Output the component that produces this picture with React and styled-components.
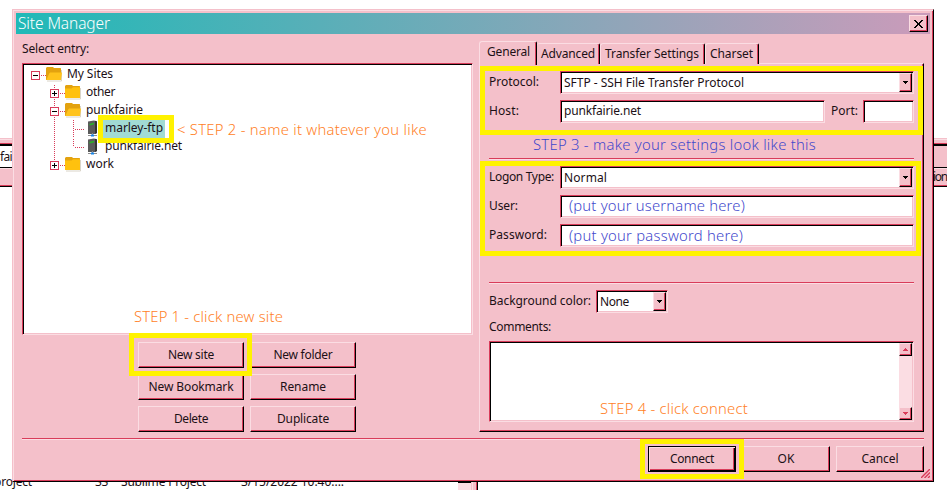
import React, { useLayoutEffect, useRef } from "react";
import styled, { createGlobalStyle, css } from "styled-components";

const C = { pink: "#f4c0ca", light: "#fbdde3", red: "#d93c5a", black: "#000", yellow: "#fff200", orange: "#ff7f27", blue: "#3f48cc" };

const Global = createGlobalStyle`
  html, body { margin: 0; background: #fff; overflow: hidden; }
  * { box-sizing: border-box; }
`;
const raised = css`
  border: 1px solid; border-color: ${C.light} ${C.black} ${C.black} ${C.light};
  box-shadow: inset -1px -1px ${C.red};
  background: ${C.pink};
`;
const sunken = css`
  border: 1px solid; border-color: ${C.red} ${C.light} ${C.light} ${C.red};
  box-shadow: inset 1px 1px ${C.black}, inset -1px -1px ${C.pink};
  background: #fff;
`;

const Label = styled.span`
  display: inline-block; white-space: pre; flex: none; align-self: flex-start;
  font-family: "Noto Sans", "Open Sans", sans-serif;
  font-size: ${p => p.$size || 12}px; line-height: 18px;
  font-weight: ${p => (p.$thin ? 350 : 400)};
  color: ${p => p.$color || "#1c1016"};
`;

/* Text tracked so that it fills exactly the given width. */
function Text({ w, children, ...rest }) {
  const ref = useRef(null);
  useLayoutEffect(() => {
    const el = ref.current;
    el.style.letterSpacing = "0px";
    el.style.width = "auto";
    const natural = el.getBoundingClientRect().width;
    el.style.letterSpacing = `${(w - natural) / children.length}px`;
    el.style.width = `${w}px`;
  }, [w, children]);
  return <Label ref={ref} {...rest}>{children}</Label>;
}

const Screen = styled.div`position: relative; width: 947px; height: 490px; overflow: hidden; background: #fff;`;
const Backdrop = styled.div`display: flex; flex-direction: column; height: 490px; padding-top: 138px;`;
const BarTop = styled.div`
  height: 6px; background: ${C.pink}; border-top: 1px solid ${C.pink};
  box-shadow: inset 0 1px ${C.light}, inset 0 -1px ${C.red};
`;
const AddressBar = styled.div`
  display: flex; height: 24px; padding-top: 2px;
  border-top: 2px solid #000; border-bottom: 1px solid #000;
  background: linear-gradient(90deg, #fff 0 500px, ${C.pink} 500px);
`;
const HeaderBar = styled.div`
  display: flex; justify-content: flex-end; height: 19px; background: ${C.pink};
  border-bottom: 1px solid #000; box-shadow: inset 0 -1px ${C.red}, inset 0 1px ${C.light};
`;
const FileList = styled.div`display: flex; flex: 1; align-items: flex-end;`;
const FileRow = styled.div`display: flex; width: 458px; height: 17px;`;
const Cell = styled.div`display: flex; width: ${p => p.$w}px; flex: none; justify-content: ${p => (p.$clip ? "flex-end" : "flex-start")}; padding-right: ${p => p.$clip || 0}px;`;
const ListEdge = styled.div`
  width: 20px; height: 9px; border-right: 1px solid #000; box-shadow: inset -1px 0 ${C.red};
  background: linear-gradient(90deg, ${C.light} 0 13px, ${C.pink} 13px 14px, ${C.light} 14px 15px, ${C.pink} 15px);
`;
const ListEdgeTop = styled.div`width: 13px; height: 2px; background: #000;`;

const Dialog = styled.div`
  position: absolute; left: 12px; top: 9px; width: 922px; height: 473px; padding: 3px;
  background: ${C.pink}; border: 1px solid; border-color: ${C.pink} #000 #000 ${C.pink};
  box-shadow: inset 1px 1px ${C.light}, inset -1px -1px ${C.red};
`;
const TitleBar = styled.div`
  display: flex; justify-content: space-between; align-items: flex-start; height: 21px; padding: 2px 2px 0 2px;
  background: linear-gradient(90deg, #20b9b7, #cb9bba);
`;
const TitleText = styled.div`display: flex; margin-top: -1px;`;
const CloseButton = styled.div`${raised} width: 19px; height: 17px; display: flex; align-items: center; justify-content: center;`;
const Columns = styled.div`display: flex; height: 404px; padding: 0 6px;`;
const Left = styled.div`width: 451px; padding-top: 6px; display: flex; flex-direction: column;`;
const Tree = styled.div`${sunken} height: 272px; margin-top: 5px; padding: 2px 0 0 8px;`;
const Node = styled.div`display: flex; align-items: center; height: 18px; padding-left: ${p => p.$indent}px;`;
const Icon = styled.svg`display: block; flex: none;`;
const Name = styled.div`
  display: flex; height: 18px; padding: 0 2px; margin-left: ${p => p.$gap || 0}px;
  background: ${p => (p.$on ? "#a1dbd4" : "transparent")};
  & > span { margin-top: -1px; }
`;
const ButtonGrid = styled.div`
  display: grid; grid-template-columns: 106px 106px; grid-auto-rows: 26px; gap: 6px; margin: 7px 0 0 116px;
`;
const Button = styled.div`
  ${raised} display: flex; justify-content: center; padding-top: 3px; height: 26px; width: ${p => p.$w || 106}px;
  ${p => p.$default && css`border-color: #000; box-shadow: inset 1px 1px ${C.light}, inset -1px -1px #000, inset -2px -2px ${C.red};`}
`;
const Right = styled.div`width: 445px; margin-left: 6px; padding-top: 7px;`;
const Tabs = styled.div`display: flex; align-items: flex-end; height: 23px; margin-bottom: -1px;`;
const Tab = styled.div`
  position: relative; z-index: ${p => (p.$active ? 1 : 0)};
  width: ${p => p.$w}px; height: 21px; padding-left: ${p => (p.$active ? 7 : 4)}px;
  background: ${C.pink}; border: solid; border-width: 1px 1px 0 ${p => (p.$divided || p.$active ? 1 : 0)}px;
  border-color: ${C.light} #000 ${C.light} ${C.light}; border-radius: 3px 2px 0 0;
  box-shadow: inset -1px 0 ${C.red};
  ${p => p.$active && css`margin-bottom: -1px; height: 24px;`}
`;
const Panel = styled.div`${raised} height: 369px; padding: 7px 9px 0 9px; display: flex; flex-direction: column;`;
const Row = styled.div`display: flex; height: 23px; align-items: flex-start; margin-bottom: ${p => p.$mb || 0}px;`;
const FieldLabel = styled.div`
  display: flex; width: ${p => p.$w || 71}px; height: 23px; flex: none;
  padding: ${p => p.$pt ?? 2}px 0 0 ${p => p.$pl || 0}px;
`;
const Field = styled.div`
  ${sunken} display: flex; justify-content: space-between; width: ${p => p.$w}px; height: 23px; padding: 1px 1px 1px 3px; flex: none;
  & > span { margin-top: ${p => (p.$combo ? 1 : 0)}px; }
`;
const DropButton = styled.div`${raised} width: 13px; height: 19px; display: flex; align-items: center; justify-content: center;`;
const Rule = styled.div`height: 2px; background: ${C.light}; border-top: 1px solid ${C.red}; margin: ${p => p.$m || 0};`;
const Comments = styled.div`${sunken} height: 81px; padding: 1px; display: flex; justify-content: flex-end;`;
const Scrollbar = styled.div`width: 13px; height: 77px; background: ${C.light}; display: flex; flex-direction: column; justify-content: space-between;`;
const ScrollButton = styled.div`${raised} width: 13px; height: 13px; display: flex; align-items: center; justify-content: center;`;
const Footer = styled.div`display: flex; justify-content: flex-end; gap: 6px; padding: 6px 6px 0 0;`;
const Grip = styled.svg`position: absolute; right: 3px; bottom: 3px;`;
const Mark = styled.div`
  position: absolute; left: ${p => p.$x}px; top: ${p => p.$y}px; width: ${p => p.$w}px; height: ${p => p.$h}px;
  border: 5px solid ${C.yellow};
`;
const NotePlace = styled.div`display: flex; position: absolute; left: ${p => p.$x}px; top: ${p => p.$y}px;`;

const Note = ({ x, y, w, color, children }) => (
  <NotePlace $x={x} $y={y}><Text w={w} $size={14.800} $thin $color={color}>{children}</Text></NotePlace>
);
const Arrow = ({ up, color = "#000" }) => (
  <Icon width="5" height="3" viewBox="0 0 5 3" shapeRendering="crispEdges">
    <path fill={color} d={up ? "M2 0h1v1h1v1h1v1H0V2h1V1h1z" : "M0 0h5v1H4v1H3v1H2V2H1V1H0z"} />
  </Icon>
);
const Dots = ({ d }) => <path d={d} stroke={C.red} strokeDasharray="1 1" />;
const Toggle = ({ plus, below, above }) => (
  <Icon width="15" height="18" shapeRendering="crispEdges">
    {above && <Dots d="M4.500 1v4" />}
    {below && <Dots d="M4.500 15v3" />}
    <rect x=".5" y="5.500" width="8" height="8" fill="#fff" stroke={C.red} />
    <path d={plus ? "M2 9.500h5M4.500 7v5" : "M2 9.500h5"} stroke="#000" />
    <Dots d="M10 9.500h5" />
  </Icon>
);
const Folder = ({ open }) => (
  <Icon width="17" height="18" viewBox="0 0 17 18">
    <path d="M1 15h14.500V4" fill="none" stroke="#d9d4c8" />
    <path d="M0 2L1 1h6l1 1h6.500l.5.500V14H0z" fill="#e3a20f" />
    {open
      ? <path d="M3.200 7.500L4 6.500H16l-1 7.500H.3z" fill="#ffc31c" />
      : <path d="M0 4.500h6.500L8 3.200h7V14H0z" fill="#ffc10e" />}
  </Icon>
);
const Server = ({ last }) => (
  <Icon width="46" height="18" viewBox="0 0 46 18">
    <g shapeRendering="crispEdges">
      <Dots d="M.5 1v17" />
      <Dots d={last ? "M19.500 1v8" : "M19.500 0v18"} />
      <Dots d="M21 9.500h10" />
    </g>
    <path d="M34 1.500L40 .5l3 1V13l-2 1h-7z" fill="#5a5a5a" />
    <path d="M41 .7l2 .8V13l-2 1z" fill="#333" />
    <path d="M35.500 4.700l4.500-1.200" stroke="#26b626" strokeWidth="1.500" />
    <path d="M34 15.500h9M38.500 13v3" stroke="#8a8a8a" />
    <path d="M37 15.500h3" stroke="#1684e8" strokeWidth="2" />
  </Icon>
);
const FolderNode = ({ indent, open, name, w, above, below }) => (
  <Node $indent={indent}>
    <Toggle plus={!open} above={above} below={below} />
    <Folder open={open} />
    <Name $gap={2}><Text w={w}>{name}</Text></Name>
  </Node>
);

export default function App() {
  return (
    <Screen>
      <Global />
      <Backdrop>
        <BarTop />
        <AddressBar><Text w={12}>fai</Text></AddressBar>
        <HeaderBar><Text w={14}>ion</Text></HeaderBar>
        <FileList>
          <FileRow>
            <Cell $w={95} $clip={63}><Text w={38}>project</Text></Cell>
            <Cell $w={26}><Text w={13}>33</Text></Cell>
            <Cell $w={120}><Text w={85}>Sublime Project</Text></Cell>
            <Cell $w={110}><Text w={103}>3/15/2022 10:40:...</Text></Cell>
          </FileRow>
          <ListEdge><ListEdgeTop /></ListEdge>
        </FileList>
      </Backdrop>
      <Dialog>
        <TitleBar>
          <TitleText><Text w={92} $size={15.500} $thin $color="#fff">Site Manager</Text></TitleText>
          <CloseButton>
            <Icon width="9" height="8" viewBox="0 0 9 8" shapeRendering="crispEdges">
              <path fill="#000" d="M0 0h2v1h1v1h1v1h1V2h1V1h1V0h2v1H8v1H7v1H6v2h1v1h1v1h1v1H7V7H6V6H5V5H4v1H3v1H2v1H0V7h1V6h1V5h1V3H2V2H1V1H0z" />
              <path fill="#000" d="M1 1h2v1H1zM6 1h2v1H6zM1 6h2v1H1zM6 6h2v1H6zM3 3h3v2H3z" />
            </Icon>
          </CloseButton>
        </TitleBar>
        <Columns>
          <Left>
            <Text w={67}>Select entry:</Text>
            <Tree>
              <FolderNode open indent={0} name="My Sites" w={46} />
              <FolderNode indent={19} name="other" w={29} above below />
              <FolderNode open indent={19} name="punkfairie" w={57} above below />
              <Node $indent={23}><Server /><Name $on $gap={3}><Text w={58}>marley-ftp</Text></Name></Node>
              <Node $indent={23}><Server last /><Name $gap={3}><Text w={77}>punkfairie.net</Text></Name></Node>
              <FolderNode indent={19} name="work" w={28} above />
            </Tree>
            <ButtonGrid>
              <Button><Text w={46}>New site</Text></Button>
              <Button><Text w={59}>New folder</Text></Button>
              <Button><Text w={85}>New Bookmark</Text></Button>
              <Button><Text w={46}>Rename</Text></Button>
              <Button><Text w={34}>Delete</Text></Button>
              <Button><Text w={52}>Duplicate</Text></Button>
            </ButtonGrid>
          </Left>
          <Right>
            <Tabs>
              <Tab $active $w={58}><Text w={43}>General</Text></Tab>
              <Tab $w={63}><Text w={54}>Advanced</Text></Tab>
              <Tab $w={105} $divided><Text w={94}>Transfer Settings</Text></Tab>
              <Tab $w={54} $divided><Text w={43}>Charset</Text></Tab>
            </Tabs>
            <Panel>
              <Row $mb={6}>
                <FieldLabel><Text w={50}>Protocol:</Text></FieldLabel>
                <Field $combo $w={354}><Text w={180}>SFTP - SSH File Transfer Protocol</Text><DropButton><Arrow /></DropButton></Field>
              </Row>
              <Row $mb={35}>
                <FieldLabel><Text w={30}>Host:</Text></FieldLabel>
                <Field $w={265}><Text w={77}>punkfairie.net</Text></Field>
                <FieldLabel $w={38} $pl={6}><Text w={27}>Port:</Text></FieldLabel>
                <Field $w={51} />
              </Row>
              <Rule $m="0 0 6px" />
              <Row $mb={6}>
                <FieldLabel><Text w={65}>Logon Type:</Text></FieldLabel>
                <Field $combo $w={354}><Text w={43}>Normal</Text><DropButton><Arrow /></DropButton></Field>
              </Row>
              <Row $mb={6}><FieldLabel><Text w={29}>User:</Text></FieldLabel><Field $w={354} /></Row>
              <Row $mb={35}><FieldLabel><Text w={58}>Password:</Text></FieldLabel><Field $w={354} /></Row>
              <Rule $m="0 0 6px" />
              <Row $mb={5}>
                <FieldLabel $w={107}><Text w={102}>Background color:</Text></FieldLabel>
                <Field $combo $w={72}><Text w={29}>None</Text><DropButton><Arrow /></DropButton></Field>
              </Row>
              <FieldLabel $pt={0}><Text w={62}>Comments:</Text></FieldLabel>
              <Comments>
                <Scrollbar>
                  <ScrollButton><Arrow up color={C.red} /></ScrollButton>
                  <ScrollButton><Arrow color={C.red} /></ScrollButton>
                </Scrollbar>
              </Comments>
            </Panel>
          </Right>
        </Columns>
        <Rule $m="0 6px" />
        <Footer>
          <Button $default $w={88}><Text w={44}>Connect</Text></Button>
          <Button $w={88}><Text w={17}>OK</Text></Button>
          <Button $w={88}><Text w={37}>Cancel</Text></Button>
        </Footer>
        <Grip width="9" height="9"><path d="M0 9L9 0M3.500 9L9 3.500M7 9L9 7" stroke={C.red} strokeWidth="1.400" /></Grip>
      </Dialog>
      <Mark $x={98} $y={115} $w={76} $h={28} />
      <Mark $x={129} $y={333} $w={123} $h={43} />
      <Mark $x={480} $y={66} $w={443} $h={69} />
      <Mark $x={480} $y={161} $w={441} $h={95} />
      <Mark $x={640} $y={439} $w={104} $h={40} />
      <Note x={177} y={120} w={250} color={C.orange}>{"< STEP 2 - name it whatever you like"}</Note>
      <Note x={134} y={307} w={149} color={C.orange}>STEP 1 - click new site</Note>
      <Note x={533} y={135} w={283} color={C.blue}>STEP 3 - make your settings look like this</Note>
      <Note x={569} y={196} w={176} color={C.blue}>(put your username here)</Note>
      <Note x={569} y={226} w={174} color={C.blue}>(put your password here)</Note>
      <Note x={600} y={399} w={148} color={C.orange}>STEP 4 - click connect</Note>
    </Screen>
  );
}
